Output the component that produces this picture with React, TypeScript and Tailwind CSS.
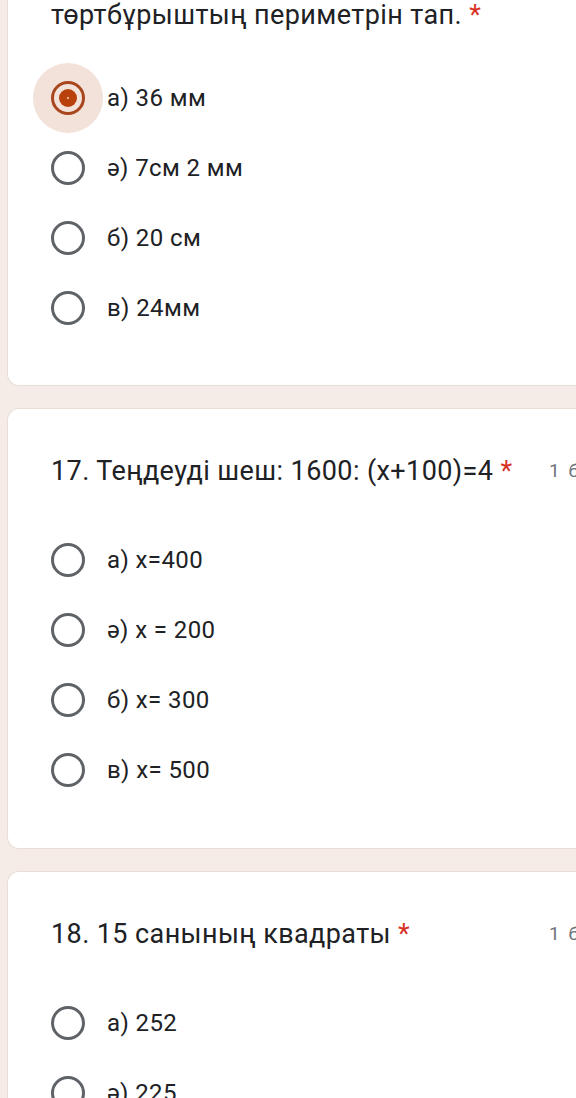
import * as React from "react";

type Question = {
  title: string;
  points?: string;
  options: string[];
  selected?: number;
  cropped?: boolean;
};

const questions: Question[] = [
  {
    title: "төртбұрыштың периметрін тап.",
    options: ["а) 36 мм", "ә) 7см 2 мм", "б) 20 см", "в) 24мм"],
    selected: 0,
    cropped: true,
  },
  {
    title: "17. Теңдеуді шеш: 1600: (x+100)=4",
    points: "1 балл",
    options: ["а) x=400", "ә) x = 200", "б) x= 300", "в) x= 500"],
  },
  {
    title: "18. 15 санының квадраты",
    points: "1 балл",
    options: ["а) 252", "ә) 225", "б) 30", "в) 155"],
  },
];

function Radio({ checked }: { checked?: boolean }) {
  return (
    <div className="relative w-[34px] h-[34px] shrink-0 flex items-center justify-center">
      {checked && (
        <div className="absolute -inset-[18px] rounded-full bg-[#f3e2da]" />
      )}
      <div
        className={
          checked
            ? "relative w-[34px] h-[34px] rounded-full border-[3px] border-[#a9461e] flex items-center justify-center"
            : "relative w-[34px] h-[34px] rounded-full border-[3px] border-[#5f6368]"
        }
      >
        {checked && (
          <div className="w-[18px] h-[18px] rounded-full bg-[#b8410e] flex items-center justify-center">
            <div className="w-[2px] h-[2px] rounded-full bg-[#f3d7c9]" />
          </div>
        )}
      </div>
    </div>
  );
}

function QuestionCard({ q }: { q: Question }) {
  return (
    <section
      className={
        q.cropped
          ? "bg-white rounded-bl-xl border-l border-b border-[#e9ddd7] pl-[43px] pb-[42px]"
          : "bg-white rounded-l-xl border-l border-y border-[#e9ddd7] pl-[43px] pt-[47px] pb-[43px]"
      }
    >
      <div className="flex items-start">
        <h2 className="w-[498px] shrink-0 text-[27px] leading-[30px] tracking-[0.4px] text-[#202124]">
          {q.title} <span className="text-[#d93025]">*</span>
        </h2>
        {q.points && (
          <span className="text-[19px] leading-[30px] text-[#70757a] tracking-[2px] whitespace-nowrap">
            {q.points}
          </span>
        )}
      </div>
      <ul className={q.cropped ? "mt-[33px]" : "mt-[39px]"}>
        {q.options.map((opt, i) => (
          <li key={opt} className="h-[70px] flex items-center">
            <Radio checked={q.selected === i} />
            <span className="ml-[22px] text-[24px] tracking-[0.4px] text-[#202124]">
              {opt}
            </span>
          </li>
        ))}
      </ul>
    </section>
  );
}

export default function App() {
  return (
    <div
      className="w-[576px] h-[1098px] overflow-hidden bg-[#f6ece7] pl-[7px] flex flex-col gap-[22px]"
      style={{ fontFamily: "Roboto, 'Noto Sans', sans-serif" }}
    >
      {questions.map((q) => (
        <div key={q.title} className="w-[640px] shrink-0">
          <QuestionCard q={q} />
        </div>
      ))}
    </div>
  );
}
